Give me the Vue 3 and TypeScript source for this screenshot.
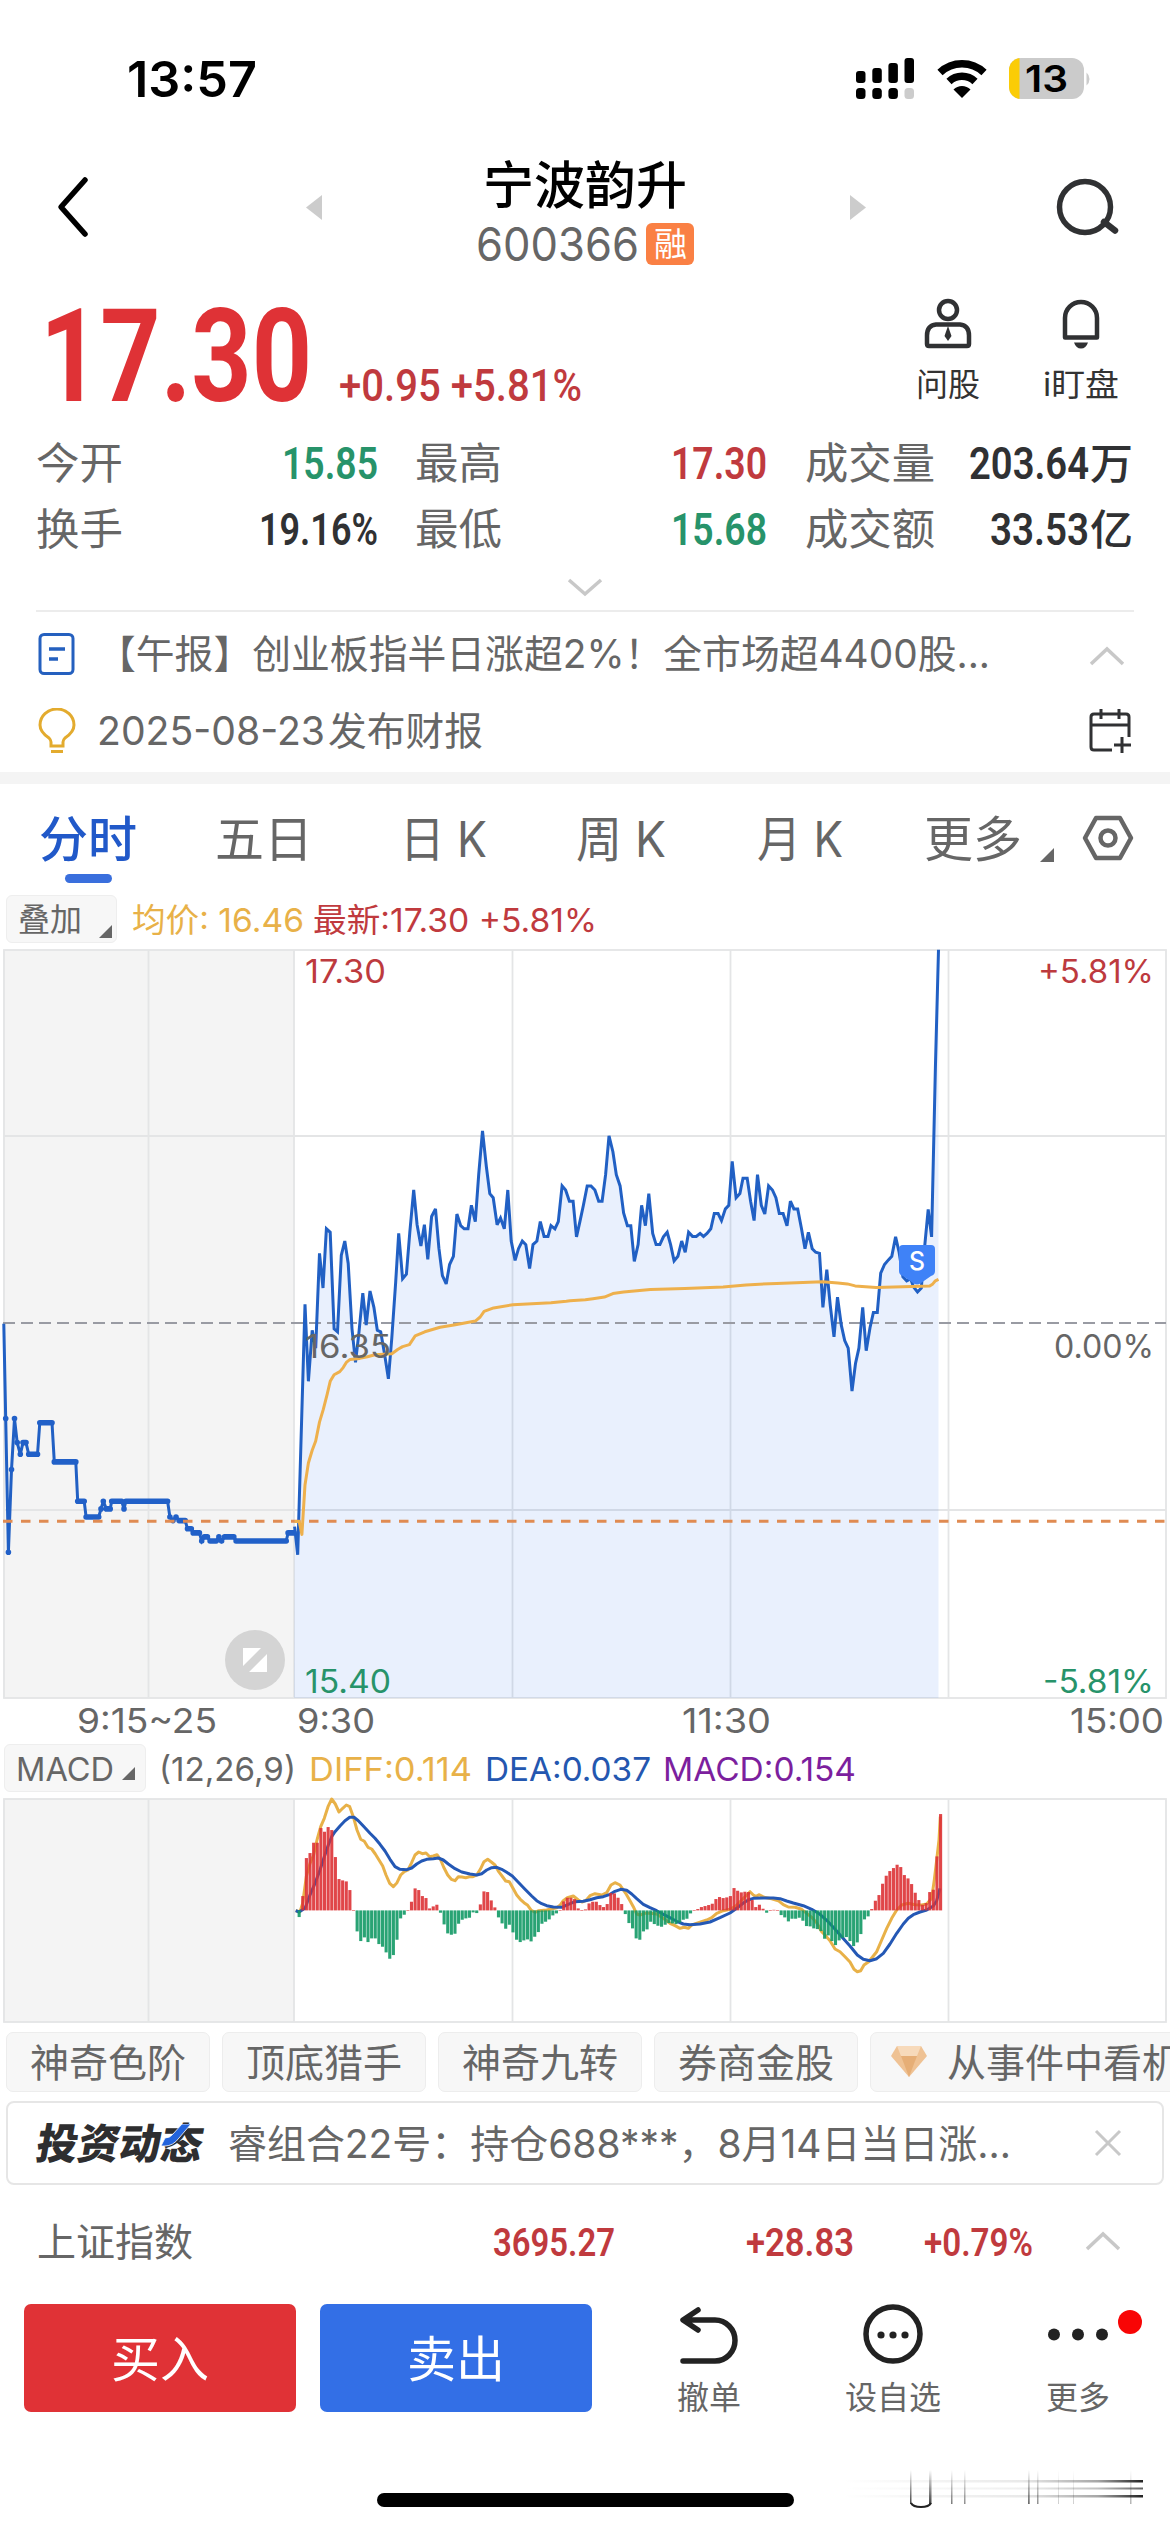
<script setup lang="ts">
import { h } from 'vue'

type FitProps = { t: string; w: number; s: number }

// One line of text set to a fixed advance width.
const Fit = (p: FitProps) =>
  h('svg', { class: 'fit', width: p.w, height: p.s, viewBox: `0 0 ${p.w} ${p.s}` }, [
    h('text', { x: 0, y: p.s * 0.87, 'font-size': p.s, textLength: p.w, lengthAdjust: 'spacingAndGlyphs' }, p.t),
  ])
Fit.props = ['t', 'w', 's']

type Pt = [number, number]
const parse = (s: string): Pt[] => s.trim().split(/\s+/).map((q) => q.split(',').map(Number) as Pt)
const place = (pts: Pt[], ox: number, oy: number, kx: number, ky: number): Pt[] =>
  pts.map(([x, y]) => [+(ox + x / kx).toFixed(1), +(oy + y / ky).toFixed(1)])
const join = (pts: Pt[]) => pts.map((q) => q.join(',')).join(' ')

const KX = 2.6133
const KY = 1.96
const auction = place(parse(`10,752 15,938 22,1200 30,1038 38,938 45,985 53,1008 60,985 68,985 75,1008 98,1008 104,946 136,946
142,1023 198,1023 203,1100 220,1100 225,1131 258,1131 264,1115 270,1100 278,1115 288,1115 292,1100 318,1100 324,1115 329,1100
438,1100 444,1131 452,1138 460,1131 468,1138 484,1138 490,1154 500,1154 505,1162 521,1162 527,1178 534,1170 542,1170 549,1178
565,1178 572,1170 579,1178 587,1170 611,1170 617,1178 748,1178 753,1162 768,1162`), 0, 940, KX, KY)
const flats = auction
  .slice(1)
  .map((q, i) => {
    const next = auction[i + 2]
    return next && next[1] === q[1] ? `M${q}L${next}` : `M${q}h.01`
  })
  .join('')

const session = [
  ...place(parse(`770,1150 778,1205 797,714 806,865 816,765 825,800 835,614 844,682 853,566 863,573 873,762 882,768 892,618
901,590 910,634 920,762 929,828 938,770 948,692 957,755 967,688 977,720 986,765 995,768 1005,812 1015,860 1024,780 1034,670
1042,575 1052,664 1062,655 1071,573 1081,490 1090,558 1100,600 1109,558 1118,626 1128,542 1138,527 1147,604 1156,658 1166,674
1175,636 1185,620 1194,537 1204,560 1213,566 1223,566 1232,520 1242,552 1251,460 1261,374 1271,445 1280,497 1289,505 1299,558
1308,545 1318,566 1327,490 1336,590 1346,628 1355,605 1365,590 1374,597 1384,644 1393,597 1403,590 1412,552 1422,581 1432,581
1440,560 1450,566 1459,552 1469,482 1478,490 1488,512`), 0, 940, KX, KY),
  ...place(parse(`8,512 17,582 26,552 35,520 45,482 55,482 65,490 75,512 84,512 93,460 102,384 112,415 121,460 131,482 140,535 150,560
159,560 168,630 178,597 187,520 197,560 206,497 216,575 225,597 235,597 244,582 254,573 263,597 272,629 282,620 292,590
301,612 310,573 320,581 330,581 340,575 349,581 358,575 368,566 377,536 387,536 396,550 406,527 415,520 424,434 434,505
444,497 452,467 463,467 472,512 481,550 490,460 500,520 509,537 519,482 529,490 538,505 547,536 557,536 567,560 576,512
585,527 595,527 605,566 614,605 623,573 633,605 642,612 652,614 661,720 671,646 680,715 690,778 699,700 709,755 718,785
727,800 737,884 746,830 755,800 765,720 774,805 784,760 793,730 803,730 812,653 822,636 832,627 841,620 851,582 860,612
870,660 880,668 890,664 898,680 908,690 918,682 927,600 936,528 945,582 955,250 963,19`), 570, 940, KX, KY),
]
const area = `294,1698 ${join(session)} 938.5,1698`

const average = [
  ...place(parse(`770,1140 782,1140 789,1165 797,1068 806,1025 816,1000 825,982 835,945 845,920 855,890 863,865 873,852 888,846
897,838 905,828 915,822 940,820 960,817 980,813 1024,811 1040,802 1052,797 1070,793 1085,776 1110,768 1150,759 1190,754
1242,747 1255,739 1265,728 1290,721 1340,715 1440,711 1480,708`), 0, 940, KX, KY),
  ...place(parse(`0,707 40,705 60,703 90,700 112,693 140,690 210,685 300,683 400,680 460,676 540,673 660,670 700,672 725,674
745,678 800,681 940,678 948,674 955,668 963,665`), 570, 940, KX, KY),
]

const diff = [
  ...place(parse(`47,392 60,395 68,370 79,290 90,250 101,225 111,180 122,140 133,115 144,80 155,57 166,72 177,96 188,85 199,75
209,80 220,110 231,150 242,178 253,184 264,202 275,207 286,222 297,240 308,258 318,285 329,310 340,320 351,308 362,285 373,275
384,270 394,250 405,225 416,216 427,221 438,219 449,230 460,228 471,224 482,240 491,262 503,285 514,298 525,302 535,290
546,291 557,293 568,290 579,290 590,285 601,268 612,245 623,238 634,246 645,255 656,275 666,288 677,303 688,305 699,325
710,345 721,358 732,368 743,376 754,391 765,397 776,392 800,390 830,383 840,376 850,362 862,353 880,348 895,360 906,366
917,362 930,347 945,341 965,345 980,338 993,315 1005,308 1020,315`), 280, 1780, 3, 3),
  ...place(parse(`17,340 30,362 40,380 50,402 60,405 75,400 90,400 110,402 130,415 150,430 165,437 180,445 193,442 205,445 215,435
240,427 260,420 275,413 290,400 310,392 330,388 345,380 360,365 375,350 390,335 400,345 408,349 418,344 432,352 455,356
475,362 490,374 505,381 525,382 545,388 560,400 575,412 590,428 605,455 615,465 630,482 645,507 660,515 675,530 690,546
702,568 712,575 722,572 732,555 745,546 757,532 770,515 785,480 800,445 815,415 830,390 845,375 865,370 885,374 905,375
920,372 935,355 943,300 950,240 957,180 961,110`), 620, 1780, 3, 3),
]
const dea = [
  ...place(parse(`47,392 57,396 75,385 90,345 105,310 120,270 133,230 145,195 155,170 165,155 180,138 195,122 209,112 222,112
235,122 250,138 270,160 285,175 300,193 315,213 330,238 345,260 360,268 380,269 395,264 410,252 425,243 440,238 460,236
475,234 490,240 505,252 525,266 545,276 570,282 590,285 605,281 620,270 635,263 650,262 665,268 680,277 697,288 715,307
735,328 755,348 770,362 785,371 800,377 820,381 845,382 865,373 885,365 910,364 930,359 950,353 970,350 990,343 1005,334`), 280, 1780, 3, 3),
  ...place(parse(`2,328 20,331 35,342 50,356 70,373 90,383 110,392 130,403 150,413 170,424 190,432 210,434 240,432 270,426
300,413 330,399 350,385 370,369 385,360 400,355 430,354 460,354 480,356 500,363 520,369 550,377 575,388 600,403 620,421
640,442 665,470 690,498 712,525 730,538 750,542 770,536 790,520 810,492 830,460 850,432 865,415 880,404 900,396 920,390
940,378 950,362 960,325`), 620, 1780, 3, 3),
]
const ZERO = 1910.4
const bars = `-20 43 157 172 203 203 247 236 250 241 160 94 90 87 61 0 -63 -92 -81 -95 -84 -84 -101 -109 -126 -145 -134 -88 -24
-13 0 26 66 61 43 37 6 12 17 -7 -42 -69 -73 -70 -40 -28 -24 -22 -6 -8 18 57 55 30 9 -21 -39 -55 -43 -66 -88 -95 -90 -87 -93
-79 -65 -40 -34 -27 -15 -9 0 27 38 38 34 6 0 3 21 26 26 16 10 19 52 51 38 19 -11 -38 -54 -84 -88 -63 -57 -34 -41 -46 -49 -43
-38 -39 -41 -37 -28 -25 -9 0 4 10 13 16 20 34 40 37 39 43 67 59 54 56 55 31 10 17 5 -7 0 1 0 -14 -21 -33 -25 -25 -22 -31 -47
-48 -54 -56 -62 -85 -75 -92 -104 -90 -82 -80 -92 -107 -96 -71 -27 -18 4 29 46 80 104 118 127 137 130 106 96 79 53 31 17 22 55
62 162 289`
  .split(/\s+/)
  .map((v, i) => {
    const d = Number(v) / 3
    const height = Math.max(Math.abs(d), 0.6)
    return { x: 297.6 + i * 3.624, y: d > 0 ? ZERO - height : ZERO, height, color: d >= 0 ? '#dd3236' : '#129a66' }
  })

const columns = [148.5, 294, 512.5, 730.5, 948.5]
const chips = ['神奇色阶', '顶底猎手', '神奇九转', '券商金股']
</script>

<template>
  <main class="screen">
    <div class="status">
      <Fit class="clock" t="13:57" :w="130" :s="50" />
      <svg class="radios" width="240" height="44" viewBox="853 55 240 44">
        <rect x="856" y="70" width="9.5" height="12" rx="3" /><rect x="872.3" y="67" width="9.5" height="15" rx="3" />
        <rect x="888.4" y="62" width="9.5" height="20" rx="3" /><rect x="904.5" y="57" width="9.5" height="25" rx="3" />
        <rect x="856" y="87" width="9.5" height="11" rx="3.5" /><rect x="872.3" y="87" width="9.5" height="11" rx="3.5" />
        <rect x="888.4" y="87" width="9.5" height="11" rx="3.5" /><rect x="904.5" y="87" width="9.5" height="11" rx="3.5" fill="#ccc" />
        <path d="M940 71.500a32 32 0 0 1 44 0M949 80.500a19 19 0 0 1 26 0" fill="none" stroke="#000" stroke-width="7.500" />
        <path d="M962 97l-8.500-8.500a12 12 0 0 1 17 0z" />
        <clipPath id="cell"><rect x="1009" y="57" width="75" height="41" rx="12" /></clipPath>
        <g clip-path="url(#cell)"><rect x="1009" y="57" width="75" height="41" fill="#cbcbcb" /><rect x="1009" y="57" width="10.500" height="41" fill="#fbcc06" /></g>
        <path d="M1086.500 71.500a8.500 8.500 0 0 1 0 13z" fill="#ccc" />
        <text x="1025" y="91" font-size="37" font-weight="600" textLength="43" lengthAdjust="spacingAndGlyphs">13</text>
      </svg>
    </div>

    <header class="head">
      <svg class="back" width="36" height="64" viewBox="0 0 36 64"><path d="M30 5 6 32l24 27" fill="none" stroke="#000" stroke-width="5.500" stroke-linecap="round" stroke-linejoin="round" /></svg>
      <svg class="prev" width="16" height="25" viewBox="0 0 16 25"><path d="M16 0v25L0 12.500z" fill="#ccc" /></svg>
      <div class="title">
        <Fit class="name" t="宁波韵升" :w="204" :s="51" />
        <div class="code"><Fit t="600366" :w="163" :s="46" /><span class="badge"><Fit t="融" :w="33" :s="33" /></span></div>
      </div>
      <svg class="next" width="16" height="25" viewBox="0 0 16 25"><path d="M0 0v25l16-12.500z" fill="#ccc" /></svg>
      <svg class="search" width="66" height="64" viewBox="0 0 66 64" fill="none" stroke="#303133" stroke-width="5.500"><circle cx="30" cy="32" r="25.500" /><path d="m49 47 11 8.500" stroke-linecap="round" stroke-width="6.500" /></svg>
    </header>

    <section class="quote">
      <Fit class="price din" t="17.30" :w="272" :s="130" />
      <Fit class="delta din" t="+0.95 +5.81%" :w="243" :s="44" />
      <div class="action ask">
        <svg width="48" height="52" viewBox="0 0 48 52" fill="none" stroke="#303133" stroke-width="4.500"><circle cx="24" cy="12" r="9" /><path d="M12 26.500h24q9 1 9 11V46q0 2-2 2H5q-2 0-2-2v-8.500q0-10 9-11z" /><path d="m24 28 3.500 10-3.500 5-3.500-5z" fill="#303133" stroke="none" /></svg>
        <Fit t="问股" :w="64" :s="32" />
      </div>
      <div class="action watch">
        <svg width="44" height="52" viewBox="0 0 44 52" fill="none" stroke="#303133" stroke-width="4.500"><path d="M6 39.500V20a16 16 0 0 1 32 0v19.500z" stroke-linejoin="round" /><path d="M15 44.500h14q-2 6-7 6t-7-6z" fill="#303133" stroke="none" /></svg>
        <Fit t="i盯盘" :w="76" :s="32" />
      </div>
    </section>

    <section class="stats">
      <div class="row">
        <Fit class="label" t="今开" :w="87" :s="43" /><Fit class="din v1 green" t="15.85" :w="96" :s="44" />
        <Fit class="label l2" t="最高" :w="87" :s="43" /><Fit class="din v2 red" t="17.30" :w="96" :s="44" />
        <Fit class="label l3" t="成交量" :w="130" :s="43" />
        <span class="v3"><Fit class="din" t="203.64" :w="120" :s="44" /><Fit class="unit" t="万" :w="43" :s="42" /></span>
      </div>
      <div class="row">
        <Fit class="label" t="换手" :w="87" :s="43" /><Fit class="din v1" t="19.16%" :w="119" :s="44" />
        <Fit class="label l2" t="最低" :w="87" :s="43" /><Fit class="din v2 green" t="15.68" :w="96" :s="44" />
        <Fit class="label l3" t="成交额" :w="130" :s="43" />
        <span class="v3"><Fit class="din" t="33.53" :w="99" :s="44" /><Fit class="unit" t="亿" :w="43" :s="42" /></span>
      </div>
      <svg class="more" width="40" height="22" viewBox="0 0 40 22"><path d="m4 4 16 14L36 4" fill="none" stroke="#c8c8c8" stroke-width="3.500" /></svg>
    </section>

    <section class="feed">
      <div class="line">
        <svg width="42" height="44" viewBox="0 0 42 44" fill="none" stroke="#2560bf" stroke-width="3"><rect x="4" y="2.500" width="33" height="39" rx="4" /><path d="M13 17h16M13 27h9" stroke-width="3.500" /></svg>
        <Fit class="headline" t="【午报】创业板指半日涨超2%！全市场超4400股..." :w="893" :s="39" />
        <svg class="fold" width="38" height="22" viewBox="0 0 38 22"><path d="M3 19 19 4l16 15" fill="none" stroke="#c8c8c8" stroke-width="3.500" /></svg>
      </div>
      <div class="line second">
        <svg width="42" height="46" viewBox="-2 0 42 46" fill="none" stroke="#e3ab2e" stroke-width="3"><path d="M13 38v-4q0-2-2-4-9-6-9-13a17 16 0 0 1 34 0q0 7-9 13-2 2-2 4v4z" /><path d="M13 43.500h12" /></svg>
        <Fit class="date" t="2025-08-23" :w="228" :s="39" /><Fit class="report" t="发布财报" :w="155" :s="39" />
        <svg class="cal" width="44" height="46" viewBox="0 0 44 46" fill="none" stroke="#303133" stroke-width="3"><path d="M40 29V9q0-3-3-3H5Q2 6 2 9v30q0 3 3 3h18M2 17h38M12 1v10M30 1v10M33 29v16M25 37h17" /></svg>
      </div>
    </section>

    <nav class="tabs">
      <div class="tab active"><Fit t="分时" :w="98" :s="49" /><i /></div>
      <Fit class="tab t2" t="五日" :w="98" :s="49" />
      <Fit class="tab t3" t="日 K" :w="87" :s="49" />
      <Fit class="tab t4" t="周 K" :w="90" :s="49" />
      <Fit class="tab t5" t="月 K" :w="86" :s="49" />
      <Fit class="tab t6" t="更多" :w="98" :s="49" />
      <svg class="corner big" width="14" height="14" viewBox="0 0 14 14"><path d="M14 0v14H0z" /></svg>
      <svg class="hex" width="52" height="48" viewBox="0 0 52 48" fill="none" stroke="#666" stroke-width="4.500"><path d="M14 4h24l11 20-11 20H14L3 24z" stroke-linejoin="round" /><circle cx="26" cy="24" r="7.500" /></svg>
    </nav>

    <div class="legend">
      <span class="pill overlay"><Fit t="叠加" :w="64" :s="32" /><svg class="corner" width="13" height="13" viewBox="0 0 14 14"><path d="M14 0v14H0z" /></svg></span>
      <Fit class="gold avg" t="均价: 16.46" :w="172" :s="33" />
      <Fit class="red last" t="最新:17.30 +5.81%" :w="284" :s="33" />
    </div>

    <svg class="plot" width="1170" height="796" viewBox="0 946 1170 796">
      <rect x="3" y="950" width="291" height="748" fill="#f4f4f4" />
      <g fill="none" stroke="#e4e5e6" stroke-width="1.800">
        <rect x="4" y="950" width="1162" height="748" />
        <path d="M4 1136H1166M4 1510H1166" />
        <line v-for="x in columns" :key="x" :x1="x" :x2="x" y1="950" y2="1698" />
      </g>
      <polygon :points="area" fill="#2f6fea" fill-opacity=".105" />
      <path d="M3 1323H1166" stroke="#999ba3" stroke-width="1.800" stroke-dasharray="12 6" />
      <g fill="none" stroke="#2160c4" stroke-width="3" stroke-linejoin="miter" stroke-miterlimit="3">
        <polyline :points="join(session)" />
        <polyline :points="join(auction)" />
      </g>
      <path :d="flats" stroke="#2160c8" stroke-width="5.600" stroke-linecap="round" fill="none" />
      <path d="M3 1521.300H1166" stroke="#e08b52" stroke-width="3" stroke-dasharray="9.500 8.500" />
      <g transform="translate(917 1245)"><path d="M-14 0h28q4 0 4 4v22q0 4-4 5L4 38q-4 3-8 0l-10-7q-4-1-4-5V4q0-4 4-4z" fill="#3f82f7" /><text x="-8" y="25" font-size="26" fill="#fff" font-weight="500" textLength="16" lengthAdjust="spacingAndGlyphs">S</text></g>
      <polyline :points="join(average)" fill="none" stroke="#eeb04c" stroke-width="3" stroke-linejoin="round" />
      <circle cx="255" cy="1660" r="30" fill="#d4d4d4" /><path d="M243 1648h18l-18 18zM267 1672h-18l18-18z" fill="#fff" />
      <g font-size="32">
        <text x="305" y="983" fill="#bd3a3e" textLength="81" lengthAdjust="spacingAndGlyphs">17.30</text>
        <text x="305" y="1358" fill="#666" textLength="86" lengthAdjust="spacingAndGlyphs">16.35</text>
        <text x="305" y="1693" fill="#27936a" textLength="86" lengthAdjust="spacingAndGlyphs">15.40</text>
        <text x="1038" y="983" fill="#bd3a3e" textLength="116" lengthAdjust="spacingAndGlyphs">+5.81%</text>
        <text x="1054" y="1358" fill="#666" textLength="100" lengthAdjust="spacingAndGlyphs">0.00%</text>
        <text x="1043" y="1693" fill="#27936a" textLength="111" lengthAdjust="spacingAndGlyphs">-5.81%</text>
      </g>
      <g font-size="34" fill="#666">
        <text x="77" y="1733" textLength="140" lengthAdjust="spacingAndGlyphs">9:15~25</text>
        <text x="297" y="1733" textLength="78" lengthAdjust="spacingAndGlyphs">9:30</text>
        <text x="682" y="1733" textLength="89" lengthAdjust="spacingAndGlyphs">11:30</text>
        <text x="1070" y="1733" textLength="94" lengthAdjust="spacingAndGlyphs">15:00</text>
      </g>
    </svg>

    <div class="legend macd">
      <span class="pill kind"><Fit t="MACD" :w="98" :s="33" /><svg class="corner" width="13" height="13" viewBox="0 0 14 14"><path d="M14 0v14H0z" /></svg></span>
      <Fit class="params" t="(12,26,9)" :w="137" :s="33" />
      <Fit class="gold" t="DIFF:0.114" :w="163" :s="33" />
      <Fit class="blue" t="DEA:0.037" :w="166" :s="33" />
      <Fit class="violet" t="MACD:0.154" :w="193" :s="33" />
    </div>

    <svg class="plot" width="1170" height="232" viewBox="0 1794 1170 232">
      <rect x="3" y="1799" width="291" height="223" fill="#f4f4f4" />
      <g fill="none" stroke="#e4e5e6" stroke-width="1.800">
        <rect x="4" y="1799" width="1162" height="223" />
        <line v-for="x in columns" :key="x" :x1="x" :x2="x" y1="1799" y2="2022" />
      </g>
      <polyline :points="join(diff)" fill="none" stroke="#e8b148" stroke-width="3" stroke-linejoin="round" />
      <polyline :points="join(dea)" fill="none" stroke="#2458b5" stroke-width="3" stroke-linejoin="round" />
      <g opacity=".9"><rect v-for="b in bars" :key="b.x" :x="b.x" :y="b.y" :height="b.height" width="3.100" :fill="b.color" /></g>
    </svg>

    <div class="chips">
      <span v-for="c in chips" :key="c" class="chip"><Fit :t="c" :w="156" :s="39" /></span>
      <span class="chip wide">
        <svg width="36" height="32" viewBox="0 0 36 32"><path d="M6 0h24l6 10-18 21L0 10z" fill="#efc294" /><path d="M6 0h24l-4 10H10z" fill="#f7dabb" /><path d="M10 10h16l-8 21z" fill="#e6ae76" /></svg>
        <Fit t="从事件中看机会" :w="273" :s="39" />
      </span>
    </div>

    <div class="card">
      <Fit class="logo" t="投资动态" :w="166" :s="42" />
      <svg class="slash" width="30" height="24" viewBox="0 0 30 24"><path d="M21 0h9L18 14q-6 8-14 8H0l4-8q5 0 8-4z" fill="#2364dd" stroke="#fff" stroke-width=".8" /></svg>
      <Fit class="story" t="睿组合22号：持仓688***，8月14日当日涨..." :w="783" :s="39" />
      <svg class="close" width="28" height="28" viewBox="0 0 28 28"><path d="m2 2 24 24M26 2 2 26" fill="none" stroke="#c8c8c8" stroke-width="3" /></svg>
    </div>

    <div class="index">
      <Fit class="label" t="上证指数" :w="156" :s="39" />
      <Fit class="din i1" t="3695.27" :w="122" :s="39" />
      <Fit class="din i2" t="+28.83" :w="108" :s="39" />
      <Fit class="din i3" t="+0.79%" :w="109" :s="39" />
      <svg class="i4" width="38" height="22" viewBox="0 0 38 22"><path d="M3 19 19 4l16 15" fill="none" stroke="#c8c8c8" stroke-width="3.500" /></svg>
    </div>

    <footer class="bar">
      <button class="buy"><Fit t="买入" :w="98" :s="49" /></button>
      <button class="sell"><Fit t="卖出" :w="98" :s="49" /></button>
      <div class="tool a"><svg width="62" height="60" viewBox="0 0 62 60" fill="none" stroke="#222" stroke-width="5.500" stroke-linecap="round" stroke-linejoin="round"><path d="M20 6 5 16l15 10M7 16h30a20 20.500 0 0 1 0 41H5" /></svg><Fit t="撤单" :w="64" :s="32" /></div>
      <div class="tool b"><svg width="62" height="60" viewBox="0 0 62 60"><circle cx="31" cy="30" r="27" fill="none" stroke="#222" stroke-width="5.500" /><g fill="#222"><circle cx="19" cy="31" r="3.600" /><circle cx="31" cy="31" r="3.600" /><circle cx="43" cy="31" r="3.600" /></g></svg><Fit t="设自选" :w="96" :s="32" /></div>
      <div class="tool c"><svg width="62" height="60" viewBox="0 0 62 60" fill="#222"><circle cx="7" cy="30.500" r="6" /><circle cx="31" cy="30.500" r="6" /><circle cx="55" cy="30.500" r="6" /></svg><Fit t="更多" :w="64" :s="32" /><b class="dot" /></div>
    </footer>

    <div class="home">
      <i />
      <svg width="306" height="46" viewBox="840 2466 306 46">
        <defs>
          <linearGradient id="fadeY" x1="0" y1="0" x2="0" y2="1"><stop offset="0" stop-color="#222" stop-opacity="0" /><stop offset="1" stop-color="#222" stop-opacity=".85" /></linearGradient>
          <linearGradient id="fadeX"><stop offset="0" stop-color="#222" stop-opacity="0" /><stop offset=".6" stop-color="#222" stop-opacity=".1" /><stop offset=".85" stop-color="#222" stop-opacity=".4" /><stop offset="1" stop-color="#222" /></linearGradient>
        </defs>
        <g fill="url(#fadeY)"><rect x="910" y="2470" width="1.500" height="34" /><rect x="929" y="2470" width="2.500" height="34" /><rect x="951" y="2470" width="1.500" height="34" opacity=".7" /><rect x="964" y="2470" width="1.500" height="34" opacity=".6" /><rect x="1028" y="2470" width="1.700" height="34" opacity=".8" /><rect x="1037" y="2470" width="1.500" height="34" opacity=".6" /><rect x="1058" y="2470" width="1" height="34" opacity=".25" /><rect x="1073" y="2470" width="1" height="34" opacity=".25" /><rect x="1130" y="2470" width="1.500" height="34" opacity=".4" /></g>
        <g fill="url(#fadeX)"><rect x="842" y="2480" width="301" height="2.500" /><rect x="842" y="2487.500" width="301" height="2" opacity=".7" /><rect x="842" y="2495" width="301" height="2.500" /></g>
        <path d="M911 2503q2 4 10 4t10-4" fill="none" stroke="#222" stroke-width="2" />
      </svg>
    </div>
  </main>
</template>

<style>
body { margin: 0; background: #fff; }
</style>

<style scoped>
.screen { width: 1170px; height: 2532px; overflow: hidden; background: #fff; color: #666; font-family: Inter, "Noto Sans CJK SC", sans-serif; display: flex; flex-direction: column; }
.screen > * { flex: none; box-sizing: border-box; }
svg { display: block; flex: none; }
.fit { overflow: visible; fill: currentColor; }
.din { font-family: Roboto, sans-serif; font-weight: 600; }
.red { color: #c03a3e; }
.green { color: #27936a; }
.gold { color: #e8b148; }
.blue { color: #2457b0; }
.violet { color: #7c1f9e; }

.status { height: 146px; padding-top: 10px; display: flex; align-items: center; }
.clock { margin-left: 127px; color: #000; font-weight: 600; }
.radios { margin-left: 596px; }

.head { height: 122px; display: flex; align-items: center; }
.back { margin-left: 55px; }
.prev { margin-left: 215px; }
.title { width: 216px; margin: 12px 0 0 160px; }
.name { color: #000; font-weight: 500; margin-left: 1px; }
.code { display: flex; align-items: center; margin-top: 10px; margin-left: -6px; }
.badge { width: 48px; height: 42px; margin-left: 7px; border-radius: 6px; background: #fa8044; color: #fff; display: flex; align-items: center; justify-content: center; }
.next { margin-left: 152px; }
.search { margin-left: 189px; }

.quote { height: 162px; padding-top: 20px; display: flex; align-items: flex-start; }
.price { margin-left: 40px; color: #df3236; font-weight: 700; }
.delta { margin: 75px 0 0 27px; color: #c03a3e; font-weight: 500; }
.action { display: flex; flex-direction: column; align-items: center; gap: 18px; margin-top: 10px; color: #333; }
.ask { margin-left: 334px; }
.watch { margin-left: 63px; }

.stats { height: 180px; display: flex; flex-direction: column; }
.row { height: 66px; padding-left: 36px; display: grid; grid-template-columns: 87px 255px 125px 264px 132px 234px; align-items: center; color: #303133; }
.row .green { color: #27936a; }
.row .red { color: #c03a3e; }
.row .label { color: #666; }
.v1, .v2 { justify-self: end; }
.l2 { justify-self: start; margin-left: 37px; }
.l3 { margin-left: 38px; }
.v3 { display: flex; align-items: center; justify-self: end; gap: 1px; }
.unit { font-weight: 500; }
.more { margin: 14px auto 0; }

.feed { height: 174px; padding: 0 36px; border-bottom: 12px solid #f4f4f4; }
.feed::before { content: ""; display: block; height: 2px; margin-bottom: 4px; background: #ececec; }
.line { height: 75px; display: flex; align-items: center; }
.second { margin-top: 2px; }
.headline { margin-left: 19px; }
.fold { margin: 5px 8px 0 auto; }
.date { margin-left: 19px; }
.report { margin-left: 3px; }
.cal { margin-left: auto; margin-right: 1px; }

.tabs { height: 108px; display: flex; align-items: center; }
.active { margin-left: 39px; color: #2159c9; font-weight: 500; position: relative; }
.active i { position: absolute; left: 26px; top: 60px; width: 47px; height: 9px; border-radius: 5px; background: #3a6fdd; }
.t2 { margin-left: 78px; }
.t3 { margin-left: 87px; }
.t4 { margin-left: 89px; }
.t5 { margin-left: 91px; }
.t6 { margin-left: 81px; }
.corner { fill: #666; }
.big { margin: 34px 0 0 18px; }
.hex { margin-left: 28px; }

.legend { height: 54px; display: flex; align-items: center; }
.pill { height: 48px; box-sizing: border-box; border: 1px solid #eee; border-radius: 6px; background: #f7f7f7; display: flex; align-items: center; }
.overlay { width: 111px; margin-left: 6px; padding-left: 11px; gap: 17px; }
.overlay .corner { margin-top: 24px; }
.avg { margin-left: 15px; }
.last { margin-left: 9px; }
.macd { height: 52px; }
.kind { width: 142px; margin-left: 4px; padding-left: 11px; gap: 8px; }
.kind .corner { margin-top: 10px; }
.params { margin-left: 13px; }
.macd > .gold { margin-left: 13px; }
.macd > .blue { margin-left: 13px; }
.macd > .violet { margin-left: 12px; }

.chips { height: 66px; margin-top: 6px; padding-left: 6px; display: flex; gap: 12px; align-items: flex-start; }
.chip { flex: none; width: 204px; height: 60px; box-sizing: border-box; border: 1px solid #ededed; border-radius: 7px; background: #f7f7f7; display: flex; align-items: center; justify-content: center; }
.wide { width: 360px; justify-content: flex-start; padding-left: 20px; gap: 20px; }

.card { height: 84px; margin: 3px 6px 0; border: 2px solid #e6e6e6; border-radius: 8px; display: flex; align-items: center; padding-left: 29px; position: relative; }
.logo { color: #2e2e30; font-weight: 900; transform: skewX(-10deg); }
.slash { position: absolute; left: 153px; top: 21px; }
.story { margin-left: 25px; }
.close { margin-left: auto; margin-right: 40px; }

.index { height: 108px; margin-top: 2px; display: flex; align-items: center; color: #c03a3e; }
.index .label { margin-left: 37px; color: #666; }
.i1 { margin-left: 300px; }
.i2 { margin-left: 131px; }
.i3 { margin-left: 70px; }
.i4 { margin-left: 51px; }

.bar { height: 150px; margin-top: 9px; display: flex; align-items: flex-start; padding-left: 24px; }
.bar button { width: 272px; height: 108px; margin: 0 24px 0 0; padding: 0; border: 0; border-radius: 7px; color: #fff; font: inherit; display: flex; align-items: center; justify-content: center; }
.bar .buy { background: #e03236; }
.bar .sell { background: #336fe6; }
.tool { width: 96px; display: flex; flex-direction: column; align-items: center; gap: 17px; position: relative; }
.a { margin-left: 45px; }
.b { margin-left: 88px; }
.c { margin-left: 89px; }
.dot { position: absolute; left: 88px; top: 6px; width: 24px; height: 24px; border-radius: 50%; background: #f80505; }

.home { height: 78px; display: flex; align-items: flex-start; }
.home i { width: 417px; height: 14px; margin: 39px 0 0 377px; border-radius: 7px; background: #000; }
.home svg { margin: 12px 0 0 46px; }
</style>
